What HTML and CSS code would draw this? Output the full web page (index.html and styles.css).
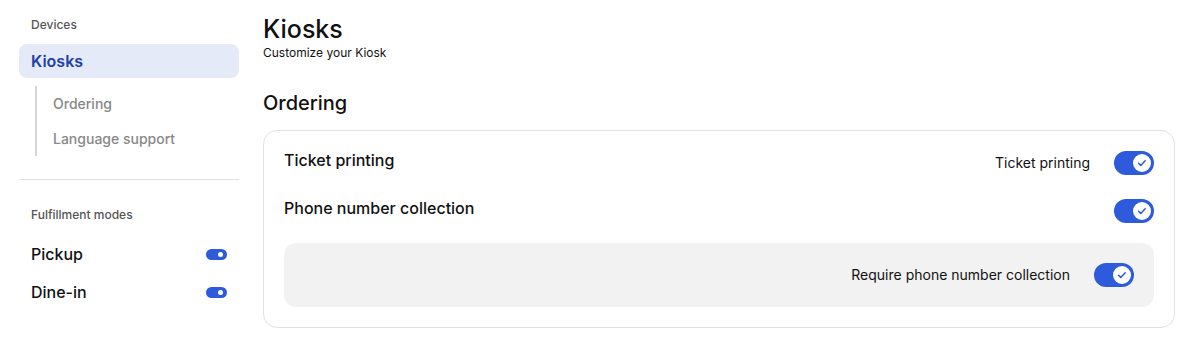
FILE: index.html
```html
<!DOCTYPE html>
<html>
<head>
<meta charset="utf-8">
<link rel="stylesheet" href="styles.css">
</head>
<body>
<div class="page">
  <aside class="sidebar">
    <div class="group-label">Devices</div>
    <div class="nav-active">Kiosks</div>
    <ul class="subnav">
      <li>Ordering</li>
      <li>Language support</li>
    </ul>
    <div class="divider"></div>
    <div class="group-label">Fulfillment modes</div>
    <div class="mode-row"><span>Pickup</span><span class="mini-toggle"></span></div>
    <div class="mode-row"><span>Dine-in</span><span class="mini-toggle"></span></div>
  </aside>
  <main class="main">
    <h1 class="title">Kiosks</h1>
    <div class="subtitle">Customize your Kiosk</div>
    <h2 class="section-title">Ordering</h2>
    <div class="card">
      <div class="row">
        <span class="row-label">Ticket printing</span>
        <div class="row-control">
          <span class="control-text">Ticket printing</span>
          <span class="toggle"><span class="knob"><svg viewBox="0 0 18 18" width="18" height="18"><path d="M5.5 9.2l2.3 2.2 4.4-4.6" fill="none" stroke="#2d5bdb" stroke-width="1.5" stroke-linecap="round" stroke-linejoin="round"/></svg></span></span>
        </div>
      </div>
      <div class="row">
        <span class="row-label">Phone number collection</span>
        <div class="row-control">
          <span class="toggle"><span class="knob"><svg viewBox="0 0 18 18" width="18" height="18"><path d="M5.5 9.2l2.3 2.2 4.4-4.6" fill="none" stroke="#2d5bdb" stroke-width="1.5" stroke-linecap="round" stroke-linejoin="round"/></svg></span></span>
        </div>
      </div>
      <div class="subbox">
        <span class="control-text">Require phone number collection</span>
        <span class="toggle"><span class="knob"><svg viewBox="0 0 18 18" width="18" height="18"><path d="M5.5 9.2l2.3 2.2 4.4-4.6" fill="none" stroke="#2d5bdb" stroke-width="1.5" stroke-linecap="round" stroke-linejoin="round"/></svg></span></span>
      </div>
    </div>
  </main>
</div>
</body>
</html>
```
FILE: styles.css
```css
* { box-sizing: border-box; }
html, body { margin: 0; padding: 0; background: #fff; }
body { font-family: Inter, "Noto Sans", sans-serif; color: #111; }
.page { display: flex; gap: 24px; padding: 0 28px 0 19px; }
.sidebar { width: 220px; flex-shrink: 0; padding-top: 17px; }
.group-label { font-size: 12px; font-weight: 500; color: #555; padding-left: 12px; line-height: 16px; }
.nav-active { margin-top: 11px; height: 34px; border-radius: 8px; background: #e5eaf9; color: #2340a8; font-size: 16px; font-weight: 600; padding-left: 12px; display: flex; align-items: center; }
.subnav { list-style: none; margin: 8px 0 0 16px; padding: 0 0 0 16px; border-left: 2px solid #d6d6d6; }
.subnav li { font-size: 14px; font-weight: 500; color: #888; height: 35px; display: flex; align-items: center; }
.divider { height: 1px; background: #e2e2e2; margin: 23px 0 27px; }
.mode-row { display: flex; align-items: center; justify-content: space-between; padding: 0 12px; height: 38px; font-size: 16px; font-weight: 500; color: #111; }
.group-label + .mode-row { margin-top: 12px; }
.mini-toggle { width: 21px; height: 11px; border-radius: 6px; background: #2d5bdb; position: relative; }
.mini-toggle::after { content: ""; position: absolute; right: 4px; top: 3px; width: 5px; height: 5px; border-radius: 50%; background: #fff; }
.main { flex: 1; padding-top: 14px; }
.title { margin: 0; font-size: 25px; font-weight: 500; line-height: 30px; color: #111; }
.subtitle { font-size: 12px; font-weight: 400; line-height: 16px; margin-top: 1px; color: #111; }
.section-title { margin: 30px 0 0; font-size: 20px; font-weight: 500; line-height: 24px; color: #111; }
.card { margin-top: 15px; border: 1px solid #e2e2e2; border-radius: 14px; padding: 20px; display: flex; flex-direction: column; gap: 24px; }
.card .subbox { margin-top: -4px; }
.row { display: flex; align-items: center; justify-content: space-between; height: 24px; }
.row-label { font-size: 16px; font-weight: 500; color: #111; align-self: flex-start; line-height: 18px; }
.row-control { display: flex; align-items: center; gap: 24px; }
.control-text { font-size: 14px; font-weight: 400; color: #111; line-height: 16px; margin-top: -1px; }
.toggle { width: 40px; height: 24px; border-radius: 12px; background: #2d5bdb; display: flex; align-items: center; justify-content: flex-end; padding-right: 3px; }
.knob { width: 18px; height: 18px; border-radius: 50%; background: #fff; display: flex; }
.subbox { background: #f2f2f2; border-radius: 12px; padding: 20px; display: flex; align-items: center; justify-content: flex-end; gap: 24px; }
```
